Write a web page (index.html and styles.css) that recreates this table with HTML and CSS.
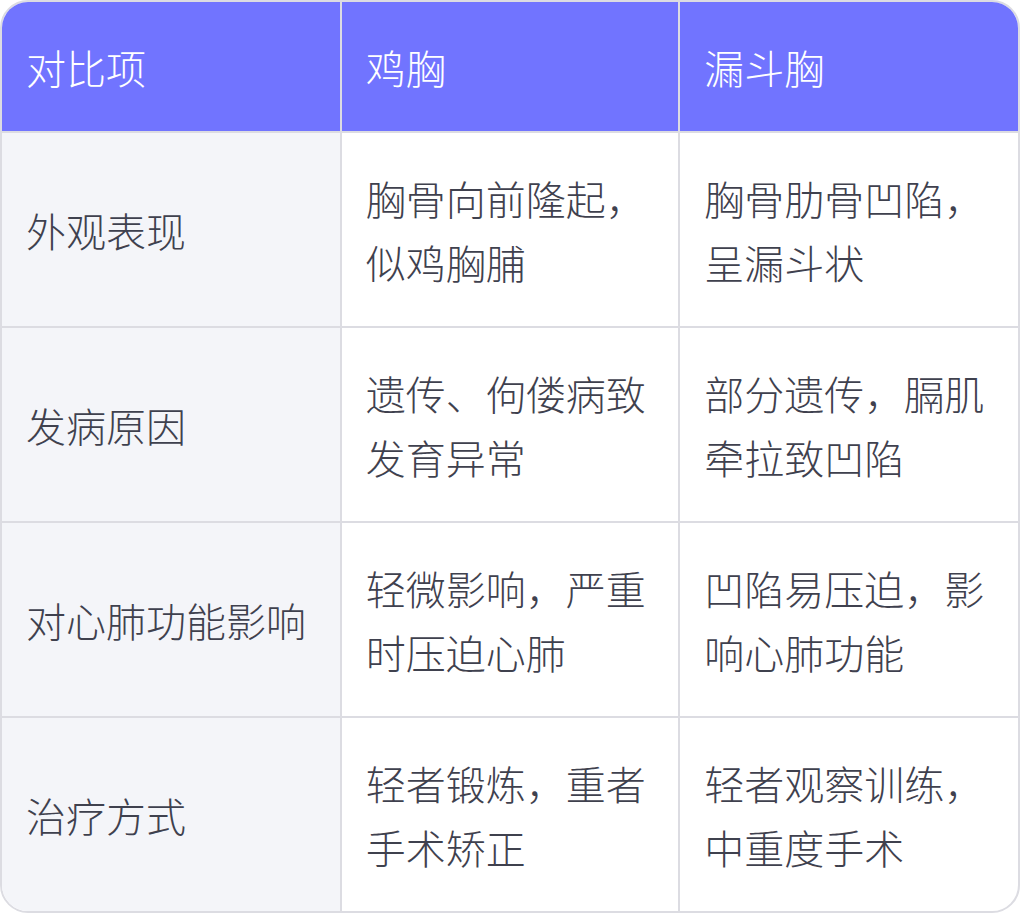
FILE: index.html
```html
<!DOCTYPE html>
<html lang="zh-CN">
<head>
<meta charset="utf-8">
<title>鸡胸与漏斗胸对比</title>
<link rel="stylesheet" href="styles.css">
</head>
<body>
<div class="table-wrap">
  <table class="compare">
    <thead>
      <tr>
        <th>对比项</th>
        <th>鸡胸</th>
        <th>漏斗胸</th>
      </tr>
    </thead>
    <tbody>
      <tr>
        <td class="label">外观表现</td>
        <td>胸骨向前隆起，似鸡胸脯</td>
        <td>胸骨肋骨凹陷，呈漏斗状</td>
      </tr>
      <tr>
        <td class="label">发病原因</td>
        <td>遗传、佝偻病致发育异常</td>
        <td>部分遗传，膈肌牵拉致凹陷</td>
      </tr>
      <tr>
        <td class="label">对心肺功能影响</td>
        <td>轻微影响，严重时压迫心肺</td>
        <td>凹陷易压迫，影响心肺功能</td>
      </tr>
      <tr>
        <td class="label">治疗方式</td>
        <td>轻者锻炼，重者手术矫正</td>
        <td>轻者观察训练，中重度手术</td>
      </tr>
    </tbody>
  </table>
</div>
</body>
</html>
```

FILE: styles.css
```css
html, body {
  margin: 0;
  padding: 0;
  background: #ffffff;
}

.table-wrap {
  width: 1020px;
  box-sizing: border-box;
  border: 2px solid #dcdce2;
  border-radius: 28px;
  overflow: hidden;
  background: #ffffff;
}

.compare {
  width: 100%;
  border-collapse: collapse;
  table-layout: fixed;
  font-family: "Noto Sans CJK SC", "Noto Sans", sans-serif;
  font-size: 40px;
  font-weight: 300;
  line-height: 64px;
  color: #3f414e;
}

.compare th,
.compare td {
  padding: 32.5px 24px;
  text-align: left;
  vertical-align: middle;
  border: 2px solid #dcdce2;
}

.compare tr:first-child th,
.compare tr:first-child td {
  border-top: none;
}

.compare th:first-child,
.compare td:first-child {
  border-left: none;
}

.compare th:last-child,
.compare td:last-child {
  border-right: none;
}

.compare tbody tr:last-child td {
  border-bottom: none;
}

.compare th {
  background: #7174ff;
  color: #ffffff;
  font-weight: 300;
}

.compare td.label {
  background: #f4f5f9;
}
```
